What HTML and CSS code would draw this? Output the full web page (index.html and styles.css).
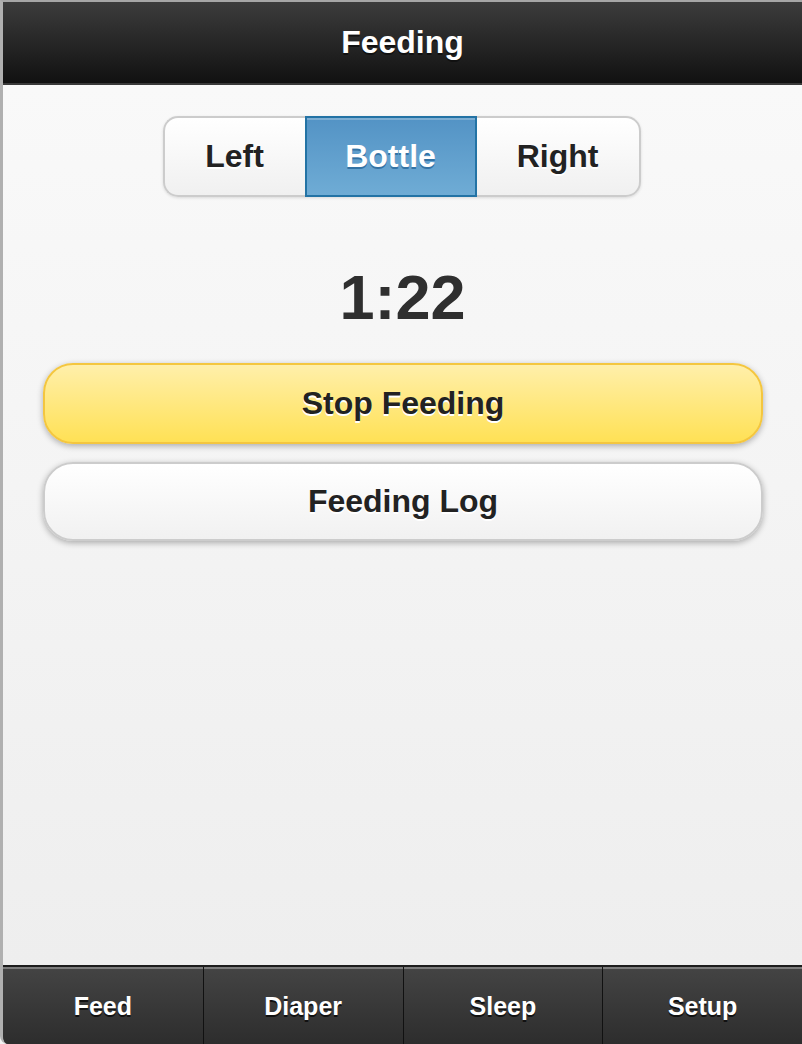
FILE: index.html
```html
<!DOCTYPE html>
<html>
<head>
<meta charset="utf-8">
<link rel="stylesheet" href="styles.css">
</head>
<body>
<div class="page">
  <header class="header"><h1 class="title">Feeding</h1></header>
  <main class="content">
    <div class="segmented">
      <div class="seg seg-first">Left</div>
      <div class="seg seg-active">Bottle</div>
      <div class="seg seg-last">Right</div>
    </div>
    <div class="timer">1:22</div>
    <div class="btn btn-yellow">Stop Feeding</div>
    <div class="btn btn-white">Feeding Log</div>
  </main>
  <nav class="footer">
    <div class="tab">Feed</div>
    <div class="tab">Diaper</div>
    <div class="tab">Sleep</div>
    <div class="tab">Setup</div>
  </nav>
</div>
</body>
</html>
```
FILE: styles.css
```css
html, body {
  margin: 0;
  padding: 0;
  height: 100%;
  background: #f2f2f2;
  font-family: "Liberation Sans", Arial, Helvetica, sans-serif;
}
.page {
  height: 1044px;
  box-sizing: border-box;
  border-left: 3px solid #b0b0b0;
  border-top: 2px solid #a6a6a6;
  display: flex;
  flex-direction: column;
  overflow: hidden;
  border-bottom-left-radius: 8px;
}
.header {
  height: 81px;
  flex: none;
  background: linear-gradient(#3c3c3c, #111111);
  border-bottom: 2px solid #3a3a3a;
  display: flex;
  align-items: center;
  justify-content: center;
}
.title {
  margin: 0;
  color: #fff;
  font-size: 32px;
  font-weight: bold;
  text-shadow: 0 2px 0 #111;
}
.content {
  flex: 1;
  background: linear-gradient(#f9f9f9, #eeeeee);
  display: flex;
  flex-direction: column;
  align-items: center;
  padding-top: 31px;
}
.segmented {
  display: flex;
  height: 81px;
  box-sizing: border-box;
  border-radius: 15px;
  box-shadow: 0 1px 3px rgba(0,0,0,0.12);
  margin-right: 2px;
}
.seg {
  display: flex;
  align-items: center;
  justify-content: center;
  box-sizing: border-box;
  font-size: 32px;
  font-weight: bold;
  color: #222;
  text-shadow: 0 2px 0 #fff;
  background: linear-gradient(#ffffff, #f0f0f0);
  border: 2px solid #cccccc;
}
.seg-first {
  width: 142px;
  border-right: none;
  border-radius: 15px 0 0 15px;
}
.seg-active {
  width: 172px;
  color: #fff;
  background: linear-gradient(#5393c5, #6facd5);
  border-color: #2373a5;
  text-shadow: 0 2px 0 #3373a5;
  box-shadow: inset 0 2px 0 rgba(255,255,255,0.25);
}
.seg-last {
  width: 164px;
  border-left: none;
  border-radius: 0 15px 15px 0;
}
.timer {
  margin-top: 68px;
  height: 64px;
  line-height: 64px;
  font-size: 63px;
  font-weight: bold;
  color: #2f2f2f;
}
.btn {
  align-self: stretch;
  margin: 0 39px 0 40px;
  height: 81px;
  box-sizing: border-box;
  border-radius: 30px;
  display: flex;
  align-items: center;
  justify-content: center;
  font-size: 32px;
  font-weight: bold;
  color: #222;
  text-shadow: 0 2px 0 #fff;
  box-shadow: 0 2px 6px rgba(0,0,0,0.3);
}
.btn-yellow {
  margin-top: 34px;
  border: 2px solid #f4c63f;
  background: linear-gradient(#ffefaa, #ffe155);
}
.btn-white {
  margin-top: 18px;
  height: 79px;
  border: 2px solid #cccccc;
  background: linear-gradient(#ffffff, #f1f1f1);
}
.footer {
  flex: none;
  height: 77px;
  display: grid;
  grid-template-columns: repeat(4, 1fr);
  border-top: 2px solid #1c1c1c;
  background: #333;
}
.tab {
  display: flex;
  align-items: center;
  justify-content: center;
  background: linear-gradient(#444444, #2d2d2d);
  box-shadow: inset 0 2px 0 rgba(255,255,255,0.3);
  border-left: 1px solid #111;
  color: #fff;
  font-size: 25px;
  font-weight: bold;
  text-shadow: 0 2px 0 #111;
  padding-top: 2px;
}
.tab:first-child {
  border-left: none;
}
```
